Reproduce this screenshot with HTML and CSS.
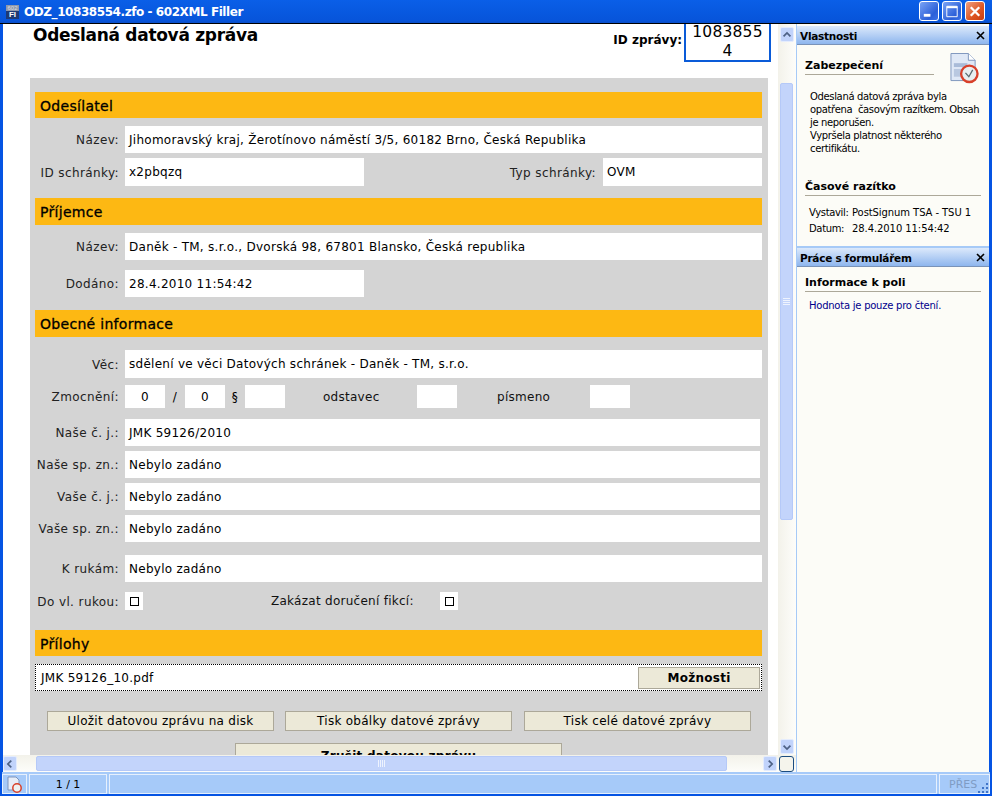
FILE: index.html

```html
<!DOCTYPE html>
<html lang="en">
<head>
  <meta charset="UTF-8" />
  <title>ODZ_10838554.zfo - 602XML Filler</title>
  <link rel="stylesheet" href="styles.css">
</head>
<body>
  <div class="window">
    <header class="titlebar">
      <span class="app-icon"><span class="icon-top">602</span><span class="icon-bottom">FI</span></span>
      <span class="title-text">ODZ_10838554.zfo - 602XML Filler</span>
      <div class="win-buttons">
        <span class="win-btn"><svg width="19" height="19" viewBox="0 0 19 19"><rect x="4" y="12" width="7" height="3" fill="#fff"/></svg></span>
        <span class="win-btn"><svg width="19" height="19" viewBox="0 0 19 19"><path d="M4 4h11v11H4z" fill="none" stroke="#fff"/><path d="M4 5h11" stroke="#fff" stroke-width="2"/></svg></span>
        <span class="win-btn close"><svg width="19" height="19" viewBox="0 0 19 19"><path d="M5 5l9 9M14 5l-9 9" stroke="#fff" stroke-width="2.4"/></svg></span>
      </div>
    </header>

    <div class="client">
      <div class="viewer">
        <div class="viewer-top">
          <main class="doc">
            <div class="doc-head">
              <h1>Odeslaná datová zpráva</h1>
              <span class="id-label">ID zprávy:</span>
              <div class="id-box">1083855<br>4</div>
            </div>

            <div class="form">
              <h2 class="bar">Odesílatel</h2>
              <div class="row mt8"><label>Název:</label><div class="field wide">Jihomoravský kraj, Žerotínovo náměstí 3/5, 60182 Brno, Česká Republika</div></div>
              <div class="row mt5 tall"><label>ID schránky:</label><div class="field half">x2pbqzq</div><label class="type-label">Typ schránky:</label><div class="field type">OVM</div></div>

              <h2 class="bar mt12 h27">Příjemce</h2>
              <div class="row mt8"><label>Název:</label><div class="field wide">Daněk - TM, s.r.o., Dvorská 98, 67801 Blansko, Česká republika</div></div>
              <div class="row mt10"><label>Dodáno:</label><div class="field half">28.4.2010 11:54:42</div></div>

              <h2 class="bar mt13 h27">Obecné informace</h2>
              <div class="row mt13 tall"><label>Věc:</label><div class="field wide">sdělení ve věci Datových schránek - Daněk - TM, s.r.o.</div></div>
              <div class="row mt7 short">
                <label>Zmocnění:</label>
                <div class="field tiny">0</div><span class="sep">/</span>
                <div class="field tiny">0</div><span class="sep">§</span>
                <div class="field tiny"></div>
                <span class="word odst">odstavec</span><div class="field tiny"></div>
                <span class="word pism">písmeno</span><div class="field tiny"></div>
              </div>
              <div class="row mt11"><label>Naše č. j.:</label><div class="field narrow">JMK 59126/2010</div></div>
              <div class="row mt5"><label>Naše sp. zn.:</label><div class="field narrow">Nebylo zadáno</div></div>
              <div class="row mt5"><label>Vaše č. j.:</label><div class="field narrow">Nebylo zadáno</div></div>
              <div class="row mt5"><label>Vaše sp. zn.:</label><div class="field narrow">Nebylo zadáno</div></div>
              <div class="row mt13"><label>K rukám:</label><div class="field wide">Nebylo zadáno</div></div>
              <div class="row mt8 check-row">
                <label>Do vl. rukou:</label><span class="check-box"><i></i></span>
                <span class="word ban">Zakázat doručení fikcí:</span><span class="check-box"><i></i></span>
              </div>

              <h2 class="bar mt18">Přílohy</h2>
              <div class="attachment mt8"><span>JMK 59126_10.pdf</span><button class="btn options">Možnosti</button></div>
              <div class="actions">
                <button class="btn">Uložit datovou zprávu na disk</button>
                <button class="btn">Tisk obálky datové zprávy</button>
                <button class="btn">Tisk celé datové zprávy</button>
              </div>
              <button class="btn last">Zrušit datovou zprávu</button>
            </div>
          </main>

          <div class="vscroll">
            <span class="sb-btn"><svg width="14" height="14" viewBox="0 0 14 14"><path d="M3 8.5l4-4 4 4" fill="none" stroke="#4d6185" stroke-width="2"/></svg></span>
            <div class="v-track">
              <div class="v-thumb"><i></i><i></i><i></i><i></i></div>
            </div>
            <span class="sb-btn"><svg width="14" height="14" viewBox="0 0 14 14"><path d="M3 5.5l4 4 4-4" fill="none" stroke="#4d6185" stroke-width="2"/></svg></span>
          </div>
        </div>

        <div class="hscroll">
          <span class="sb-btn"><svg width="14" height="14" viewBox="0 0 14 14"><path d="M8.5 3l-4 4 4 4" fill="none" stroke="#4d6185" stroke-width="2"/></svg></span>
          <div class="h-track"><div class="h-thumb"><i></i><i></i><i></i><i></i></div></div>
          <span class="sb-btn"><svg width="14" height="14" viewBox="0 0 14 14"><path d="M5.5 3l4 4-4 4" fill="none" stroke="#4d6185" stroke-width="2"/></svg></span>
          <span class="corner"></span>
        </div>
      </div>

      <aside class="side">
        <div class="pane-head">Vlastnosti<svg class="pane-x" width="9" height="9" viewBox="0 0 9 9"><path d="M1 1l7 7M8 1l-7 7" stroke="#000" stroke-width="1.6"/></svg></div>
        <div class="pane props">
          <div class="sec-top">
            <h3 class="sec-title">Zabezpečení</h3>
            <svg class="sec-icon" width="29" height="32" viewBox="0 0 30 32">
              <path d="M1 1h18l7 7v21H1z" fill="#dfe8f6" stroke="#7d95bd"/>
              <path d="M19 1v7h7" fill="#fff" stroke="#7d95bd"/>
              <rect x="4" y="11" width="14" height="4" fill="#a9bbd8"/>
              <rect x="4" y="17" width="10" height="8" fill="#b9c8e0"/>
              <circle cx="20" cy="22" r="8.5" fill="#e8eef0" stroke="#d8402a" stroke-width="2.4"/>
              <path d="M16 21l3.5 4 4-7" fill="none" stroke="#5a6a70" stroke-width="1.3"/>
            </svg>
          </div>
          <p class="sec-text">Odeslaná datová zpráva byla opatřena&nbsp; časovým razítkem. Obsah je neporušen.<br>Vypršela platnost některého certifikátu.</p>
          <h3 class="sec-title stamp">Časové razítko</h3>
          <div class="kv"><span>Vystavil:</span><span>PostSignum TSA - TSU 1</span></div>
          <div class="kv"><span>Datum:</span><span>28.4.2010 11:54:42</span></div>
        </div>
        <div class="pane-head">Práce s formulářem<svg class="pane-x" width="9" height="9" viewBox="0 0 9 9"><path d="M1 1l7 7M8 1l-7 7" stroke="#000" stroke-width="1.6"/></svg></div>
        <div class="pane info">
          <h3 class="sec-title">Informace k poli</h3>
          <p class="hint">Hodnota je pouze pro čtení.</p>
        </div>
      </aside>
    </div>

    <footer class="status">
      <span class="cell cell-icon">
        <svg width="16" height="17" viewBox="0 0 16 17">
          <path d="M1 1h8l3 3v10H1z" fill="#e6edf8" stroke="#7d95bd"/>
          <circle cx="10" cy="12" r="4.2" fill="#eef2f2" stroke="#d8402a" stroke-width="1.5"/>
        </svg>
      </span>
      <span class="cell cell-page">1 / 1</span>
      <span class="cell cell-fill"></span>
      <span class="cell cell-mode">PŘES<svg class="grip" width="11" height="11" viewBox="0 0 11 11"><path d="M8 1h2v2H8zM4 5h2v2H4zM8 5h2v2H8zM0 9h2v2H0zM4 9h2v2H4zM8 9h2v2H8z" fill="#3f74c8"/></svg></span>
    </footer>
  </div>
</body>
</html>
```

FILE: styles.css

```css
* { box-sizing: border-box; }
html, body { margin: 0; padding: 0; }
body { font-family: "DejaVu Sans", Verdana, sans-serif; font-size: 12px; color: #000; overflow: hidden; }

.window { width: 992px; height: 796px; display: flex; flex-direction: column; background: #0554e3; overflow: hidden; }

/* title bar */
.titlebar { height: 24px; flex: none; display: flex; align-items: center; padding: 0 7px 0 6px; background: linear-gradient(180deg, #0a5fe8 0%, #0a5ee6 8%, #0859e0 50%, #0754da 90%, #0a4fc8 100%); color: #fff; border-bottom: 1px solid #000; }
.app-icon { width: 13px; height: 14px; display: flex; flex-direction: column; overflow: hidden; font-family: "Liberation Sans", sans-serif; text-align: center; }
.icon-top { height: 6px; background: #8f98ab; color: #d8dce4; font-size: 6px; line-height: 6px; }
.icon-bottom { height: 8px; background: #1d3a75; color: #fff; font-size: 8px; line-height: 8px; font-weight: bold; }
.title-text { margin-left: 5px; font: bold 12px "DejaVu Sans", sans-serif; letter-spacing: -0.43px; }
.win-buttons { margin-left: auto; display: flex; gap: 3px; margin-top: -1px; }
.win-btn { width: 20px; height: 20px; border: 1px solid #fff; border-radius: 3px; background: linear-gradient(135deg, #7aa3f5, #2b5fd8 70%, #3c73e8); display: flex; align-items: center; justify-content: center; }
.win-btn.close { background: linear-gradient(135deg, #f0a080, #dd5522 60%, #c83d12); }

/* main area */
.client { flex: 1; min-height: 0; display: flex; padding: 0 3px; }
.viewer { width: 793px; flex: none; display: flex; flex-direction: column; }
.viewer-top { flex: 1; min-height: 0; display: flex; }
.doc { width: 775px; flex: none; background: #fff; overflow: hidden; padding-left: 27px; }

.doc-head { height: 54px; display: flex; }
.doc-head h1 { margin: 1px 0 0 3px; font-size: 17px; line-height: 21px; font-weight: bold; letter-spacing: -0.3px; }
.id-label { margin: 9px 2px 0 auto; font-weight: bold; font-size: 12px; line-height: 15px; }
.id-box { width: 87px; height: 41px; margin: -3px 7px 0 0; border: 2px solid #0a5bd8; font: 15.5px/19px "DejaVu Sans", sans-serif; text-align: center; flex: none; letter-spacing: 0.2px; }

.form { width: 738px; height: 700px; background: #d4d4d4; padding: 14px 6px 0 5px; letter-spacing: 0.27px; }
.bar { margin: 0; height: 26px; padding-left: 5px; background: #fdb813; font-size: 14px; line-height: 28px; font-weight: normal; letter-spacing: 0.3px; -webkit-text-stroke: 0.3px #000; }
.h27 { height: 27px; }

.row { display: flex; height: 27px; align-items: center; }
.row.tall { height: 28px; }
.row.short { height: 23px; }
.row.check-row { height: 22px; }
.row label { width: 84px; margin-right: 6px; padding-top: 1px; text-align: right; white-space: nowrap; flex: none; color: #222; letter-spacing: 0.4px; }
.field { height: 100%; background: #fff; line-height: 29px; padding-left: 4px; white-space: nowrap; overflow: hidden; }
.wide { width: 637px; }
.narrow { width: 635px; }
.half { width: 239px; }
.type { width: 159px; }
.row .type-label { width: auto; margin-left: auto; margin-right: 7px; }
.tiny { width: 40px; padding: 0; text-align: center; line-height: 25px; }
.sep { width: 20px; text-align: center; }
.word { white-space: nowrap; color: #111; }
.odst { width: 94px; margin-left: 38px; }
.pism { width: 93px; margin-left: 40px; }
.check-box { width: 18px; height: 18px; background: #fff; display: flex; align-items: center; justify-content: center; }
.check-box i { width: 9px; height: 9px; border: 1px solid #000; }
.ban { margin-left: 128px; width: 169px; }

.attachment { height: 27px; display: flex; align-items: center; justify-content: space-between; padding: 0 1px 0 5px; background: #fff; border: 1px dotted #000; }
.btn { border: 1px solid #aca899; background: #ece9d8; font: 12px "DejaVu Sans", sans-serif; letter-spacing: 0.27px; color: #000; padding: 0; }
.options { width: 122px; height: 22px; font-weight: bold; }
.actions { display: flex; gap: 11px; margin: 20px 0 0 12px; }
.actions .btn { width: 227px; height: 20px; }
.actions .btn:last-child { margin-left: 1px; }
.btn.last { display: block; width: 327px; height: 26px; margin: 12px 0 0 200px; font-weight: bold; }

.mt5 { margin-top: 5px; }
.mt7 { margin-top: 7px; }
.mt8 { margin-top: 8px; }
.mt10 { margin-top: 10px; }
.mt11 { margin-top: 11px; }
.mt12 { margin-top: 12px; }
.mt13 { margin-top: 13px; }
.mt18 { margin-top: 18px; }

/* scrollbars */
.vscroll { width: 18px; flex: none; display: flex; flex-direction: column; padding: 3px 3px 1px 2px; background: linear-gradient(90deg, #f3f2ea, #fdfdfa); }
.sb-btn { width: 14px; height: 15px; flex: none; background: #c1d3fb; border: 1px solid #e4ecfd; border-radius: 2px; display: flex; align-items: center; justify-content: center; }
.v-track { flex: 1; padding: 41px 0 219px; }
.v-thumb { height: 100%; background: #c3d4fb; border: 1px solid #b5c9f8; border-radius: 2px; display: flex; flex-direction: column; align-items: center; justify-content: center; gap: 1px; }
.v-thumb i { width: 7px; height: 1px; background: #eef3fe; }
.hscroll { height: 17px; flex: none; display: flex; align-items: center; background: linear-gradient(180deg, #f3f2ea, #fdfdfa); }
.h-track { flex: 1; height: 100%; padding: 1px 36px 1px 19px; }
.h-thumb { height: 100%; background: #c3d4fb; border: 1px solid #b5c9f8; border-radius: 2px; display: flex; align-items: center; justify-content: center; gap: 1px; }
.h-thumb i { width: 1px; height: 7px; background: #eef3fe; }
.corner { width: 15px; height: 16px; margin: 1px 2px 0 2px; border: 1px solid #1c4d80; border-radius: 3px; background: #f5f4ec; flex: none; }

/* side panel */
.side { flex: 1; padding-top: 2px; border-left: 1px solid #a6caf7; background: #fcfcf7; font-family: "DejaVu Sans", sans-serif; font-size: 10px; letter-spacing: -0.35px; }
.pane-head { height: 19px; padding: 1px 0 0 3px; display: flex; align-items: center; justify-content: space-between; background: linear-gradient(180deg, #dce9fb, #8eb6ee); border-bottom: 1px solid #7a93b8; font-weight: bold; font-size: 10.5px; letter-spacing: -0.25px; }
.pane-x { margin-right: 4px; }
.pane { background: #fcfcf7; }
.props { height: 203px; padding: 9px 8px 0 8px; border-bottom: 2px solid #a6caf7; }
.info { padding: 9px 8px 0 8px; }
.sec-top { display: flex; align-items: flex-start; height: 42px; }
.sec-title { margin: 0; font-size: 11px; line-height: 14px; font-weight: bold; letter-spacing: 0; border-bottom: 1px solid #aca899; padding-bottom: 1px; }
.sec-top .sec-title { width: 129px; margin-top: 5px; }
.sec-icon { margin: -2px 0 0 16px; }
.sec-text { margin: -6px 0 0 5px; font-size: 10px; line-height: 13px; }
.stamp { margin-top: 25px; }
.kv { display: flex; margin: 0 0 0 4px; line-height: 16px; letter-spacing: -0.08px; }
.stamp + .kv { margin-top: 9px; }
.kv span:first-child { width: 43px; flex: none; letter-spacing: -0.35px; }
.hint { margin: 7px 0 0 4px; color: #00008b; line-height: 13px; letter-spacing: -0.24px; }

/* status bar */
.status { height: 22px; flex: none; margin: 0 2px 2px; padding-top: 2px; display: flex; background: #a6caf9; }
.cell { background: #a6caf9; border: 1px solid #e6f0fd; display: flex; align-items: center; justify-content: center; height: 20px; font-size: 11px; }
.cell-icon { width: 25px; margin-right: 2px; }
.cell-page { width: 78px; margin-right: 2px; }
.cell-fill { flex: 1; margin-right: 2px; }
.cell-mode { width: 51px; color: #7f9cc4; justify-content: flex-start; padding-left: 9px; overflow: hidden; }
.grip { margin: 7px 0 0 1px; flex: none; }
```
